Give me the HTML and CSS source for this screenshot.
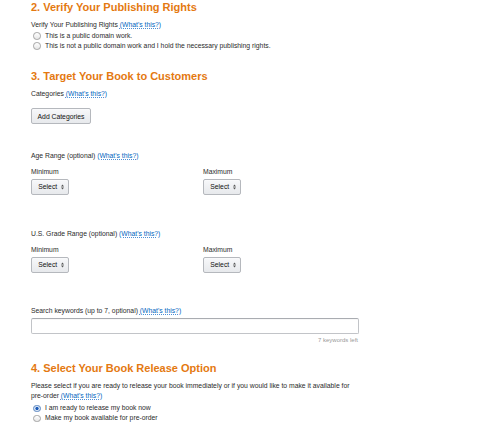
FILE: index.html
```html
<!DOCTYPE html>
<html lang="en">
<head>
<meta charset="utf-8">
<title>Book details</title>
<link rel="stylesheet" href="styles.css">
</head>
<body>
<div class="page">
  <section class="sec sec-rights">
    <h2 class="title">2. Verify Your Publishing Rights</h2>
    <div class="label">Verify Your Publishing Rights <a class="help">(What's this?)</a></div>
    <div class="radios radios-rights">
      <label class="radio"><span class="dot"></span>This is a public domain work.</label>
      <label class="radio"><span class="dot"></span>This is not a public domain work and I hold the necessary publishing rights.</label>
    </div>
  </section>

  <section class="sec sec-target">
    <h2 class="title">3. Target Your Book to Customers</h2>
    <div class="label">Categories <a class="help">(What's this?)</a></div>
    <button class="btn btn-add">Add Categories</button>

    <div class="label label-range">Age Range (optional) <a class="help">(What's this?)</a></div>
    <div class="range">
      <div class="col">
        <div class="sub">Minimum</div>
        <span class="btn select">Select <svg class="arrows" width="3" height="6" viewBox="0 0 3 6"><path d="M0 2.4 L1.5 0.6 L3 2.4 Z M0 3.6 L1.5 5.4 L3 3.6 Z"/></svg></span>
      </div>
      <div class="col">
        <div class="sub">Maximum</div>
        <span class="btn select">Select <svg class="arrows" width="3" height="6" viewBox="0 0 3 6"><path d="M0 2.4 L1.5 0.6 L3 2.4 Z M0 3.6 L1.5 5.4 L3 3.6 Z"/></svg></span>
      </div>
    </div>

    <div class="label label-grade">U.S. Grade Range (optional) <a class="help">(What's this?)</a></div>
    <div class="range">
      <div class="col">
        <div class="sub">Minimum</div>
        <span class="btn select">Select <svg class="arrows" width="3" height="6" viewBox="0 0 3 6"><path d="M0 2.4 L1.5 0.6 L3 2.4 Z M0 3.6 L1.5 5.4 L3 3.6 Z"/></svg></span>
      </div>
      <div class="col">
        <div class="sub">Maximum</div>
        <span class="btn select">Select <svg class="arrows" width="3" height="6" viewBox="0 0 3 6"><path d="M0 2.4 L1.5 0.6 L3 2.4 Z M0 3.6 L1.5 5.4 L3 3.6 Z"/></svg></span>
      </div>
    </div>

    <div class="label label-keywords">Search keywords (up to 7, optional) <a class="help">(What's this?)</a></div>
    <div class="keywords">
      <input class="kw-input" type="text">
      <div class="kw-left">7 keywords left</div>
    </div>
  </section>

  <section class="sec sec-release">
    <h2 class="title">4. Select Your Book Release Option</h2>
    <p class="para">Please select if you are ready to release your book immediately or if you would like to make it available for<br>pre-order <a class="help">(What's this?)</a></p>
    <div class="radios radios-release">
      <label class="radio"><span class="dot dot-on"></span>I am ready to release my book now</label>
      <label class="radio"><span class="dot"></span>Make my book available for pre-order</label>
    </div>
  </section>
</div>
</body>
</html>
```

FILE: styles.css
```css
html, body {
  margin: 0;
  padding: 0;
  background: #ffffff;
}

body {
  font-family: "Liberation Sans", Arial, sans-serif;
  font-size: 6.8px;
  line-height: 10px;
  color: #2b2b2b;
}

.page {
  width: 328px;
  padding-left: 31px;
}

.sec {
  display: flex;
  flex-direction: column;
  align-items: flex-start;
}

.title {
  margin: 0;
  font-size: 11px;
  line-height: 14px;
  font-weight: 700;
  color: #e47911;
}

.sec-target {
  margin-top: 17.5px;
}

.sec-release {
  margin-top: 16.8px;
}

.label {
  margin-top: 6px;
  height: 10px;
  white-space: nowrap;
}

.label-range {
  margin-top: 26.7px;
}

.label-grade {
  margin-top: 34px;
}

.label-keywords {
  margin-top: 33px;
}

.help {
  color: #0066c0;
  text-decoration: underline dotted #4d8fd6;
  text-decoration-thickness: 1px;
  text-underline-offset: 1px;
  cursor: pointer;
}

.radios {
  display: flex;
  flex-direction: column;
}

.radios-rights {
  margin-top: 1px;
}

.radios-release {
  margin-top: 2.5px;
}

.radio {
  display: flex;
  align-items: center;
  height: 10px;
  white-space: nowrap;
}

.dot {
  box-sizing: border-box;
  width: 7.5px;
  height: 7.5px;
  margin: 0 4.5px 0 2px;
  border-radius: 50%;
  border: 1px solid #a3a3a3;
  background: linear-gradient(#ffffff, #e6e6e6);
  flex: none;
}

.dot-on {
  border-color: #5b86c0;
  background: radial-gradient(circle, #1d5bb8 0, #1d5bb8 1.3px, #cfdff2 1.9px, #e8f0fa 100%);
}

.btn {
  box-sizing: border-box;
  display: inline-flex;
  align-items: center;
  justify-content: center;
  height: 16px;
  border: 1px solid #b5b8bd;
  border-radius: 2px;
  background: linear-gradient(#f7f8fa, #e7e9ec);
  box-shadow: 0 0.5px 0 rgba(255,255,255,0.6) inset;
  font-family: "Liberation Sans", Arial, sans-serif;
  font-size: 6.8px;
  color: #111111;
  padding: 0;
}

.btn-add {
  margin-top: 9.5px;
  width: 60px;
}

.range {
  display: grid;
  grid-template-columns: 172px auto;
  width: 328px;
}

.col {
  display: flex;
  flex-direction: column;
  align-items: flex-start;
}

.sub {
  margin-top: 6px;
  height: 10px;
}

.select {
  margin-top: 2px;
  width: 38px;
  justify-content: flex-start;
  padding-left: 6.3px;
  gap: 4px;
}

.arrows {
  fill: #555555;
  display: block;
}

.keywords {
  margin-top: 2px;
  width: 328px;
  display: flex;
  flex-direction: column;
}

.kw-input {
  box-sizing: border-box;
  width: 328px;
  height: 16px;
  margin: 0;
  border: 1px solid #c2c4c8;
  border-top-color: #a9acb1;
  border-radius: 2px;
  box-shadow: 0 0.5px 0 rgba(0,0,0,0.06) inset;
  background: #ffffff;
  padding: 0 4px;
}

.kw-left {
  margin-top: 2.3px;
  text-align: right;
  font-size: 6px;
  line-height: 8px;
  color: #999999;
  padding-right: 1px;
}

.para {
  margin: 6px 0 0 0;
  width: 328px;
  line-height: 10px;
}
```
